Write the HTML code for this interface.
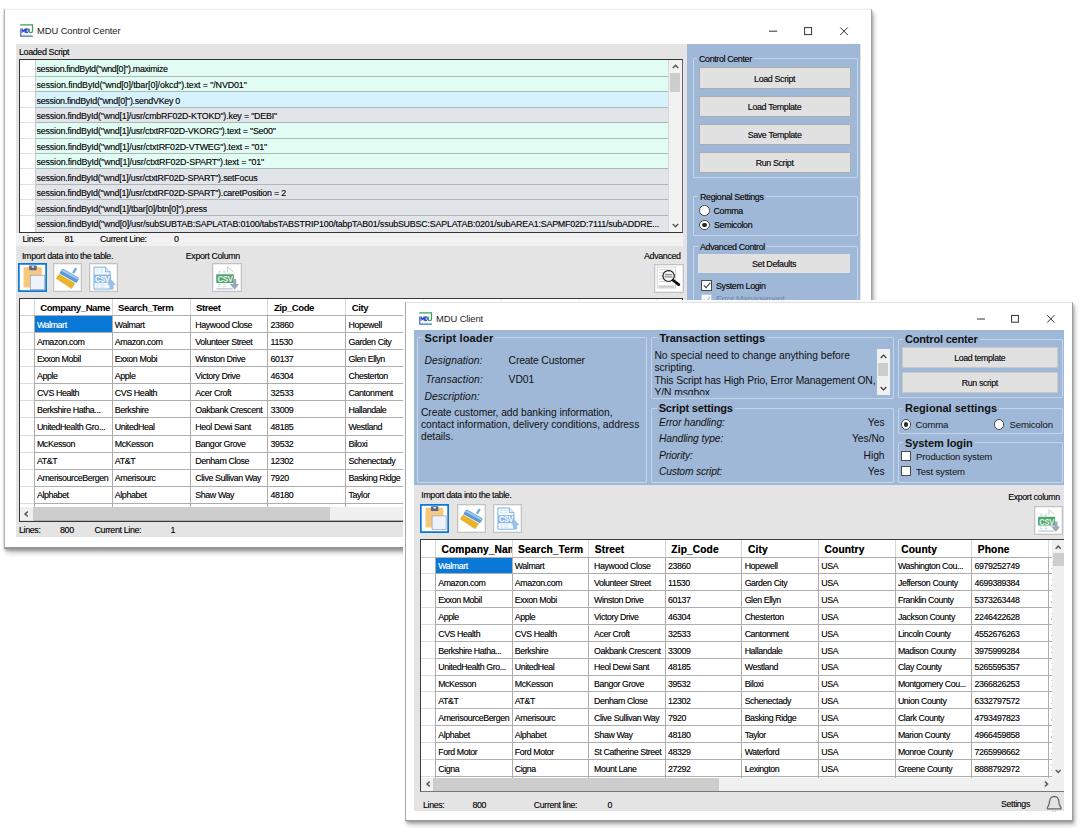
<!DOCTYPE html>
<html><head><meta charset="utf-8"><title>MDU</title>
<style>
*{box-sizing:border-box;margin:0;padding:0}
html,body{width:1080px;height:828px;overflow:hidden;background:#fff}
body{position:relative;font-family:"Liberation Sans",sans-serif;font-size:8.9px;color:#111;letter-spacing:-0.355px}
div,span,b,i{position:absolute;white-space:nowrap}
b{font-weight:bold}
i{font-style:normal}
.win{background:#fff;border-left:1px solid #b0b0b0;border-top:1px solid #ededed;border-right:1.4px solid #a2a2a2;border-bottom:2px solid #969696;box-shadow:-1px 0 1px rgba(0,0,0,.08),1px 2px 2px rgba(0,0,0,.2),2px 4px 5px rgba(0,0,0,.24)}
.client{background:#e4e4e4}
.blue{background:#9fb8d8}
.ttl{font-size:9.4px;letter-spacing:-0.08px;color:#1c1c1c}
.t{line-height:12px;height:12px}
.gb{border:1px solid #c4d4ea;border-radius:1px}
.gbl{background:#9fb8d8;padding:0 2px;line-height:11px;height:11px}
.btn{background:#e1e1e1;border:1px solid #adadad;text-align:center}
.btn i{left:0;right:0;top:50%;margin-top:-5.3px;height:12px;line-height:12px;text-align:center}
.ib{background:#fff;box-shadow:inset 0 0 0 1px #c3c3c3,inset 0 0 0 2px #ededed}
.ib.foc{box-shadow:inset 0 0 0 1.7px #0a78d7}
svg{position:absolute;overflow:visible}
/* script grid */
.sgrid{left:19px;top:59px;width:664.3px;height:173.6px;border:1.5px solid #333;border-right-color:#666;background:#fff;overflow:hidden}
.srow{left:0;width:648.6px}
.srow::after{content:"";position:absolute;left:15.5px;right:0;bottom:0;height:1px;background:#aeb6b6}
.srow.g{background:#e0fcf3}
.srow.b{background:#d6f2fd}
.srow.y{background:#e1e5ea}
.srow .rh{left:0;top:0;bottom:0;width:15.5px;background:#fff;border-right:1px solid #c9c9c9;border-bottom:1px solid #e0e0e0}
.srow .st{left:16.5px;top:2.3px;line-height:12px;height:12px;font-size:8.9px}
/* data grids */
.dg1,.dg2{background:#fff;overflow:hidden}
.dg1{left:19px;top:298.3px;width:664.3px;height:223.5px;border:1.5px solid #383838}
.dg2{left:419.5px;top:539px;width:644.7px;height:253px;border:1.5px solid #3c3c3c;border-right:0;border-bottom:1.7px solid #777}
.vl{width:1px;background:#adadad}
.vl.h{background:#d6d6d6}
.hl{height:1px;background:#adadad}
.hl.rh{background:#dcdcdc}
.selc{background:#0a78d7}
.hc{overflow:hidden}
.hc b{left:5.5px;top:50%;margin-top:-5px;line-height:12px;height:12px;font-size:9.6px;letter-spacing:-0.45px;color:#000}
.dc{overflow:hidden}
.dc i{text-shadow:0 0 .45px rgba(0,0,0,.55);left:2.2px;top:50%;margin-top:-5.5px;line-height:12px;height:12px;letter-spacing:-0.41px}
.dc.sel i{color:#fff;text-shadow:0 0 .45px rgba(255,255,255,.6)}
.dg2 .hc b{font-size:10.2px;letter-spacing:.12px;margin-top:-4.0px;text-shadow:0 0 .5px rgba(0,0,0,.6)}
.dg2 .dc i{font-size:8.8px;letter-spacing:-0.4px;margin-top:-5.2px}
.m2{font-size:8.8px}
.dg2 .hc{overflow:hidden}
/* scrollbars */
.sb{background:#f0f0f0}
.th{background:#cdcdcd}
.arr{font-size:9px;color:#444;letter-spacing:0;line-height:10px}
/* window 2 text (Arial-like) */
.a{font-size:10.3px;letter-spacing:-0.056px;line-height:12.2px;color:#111}
.ab{font-size:11px;font-weight:bold;letter-spacing:-0.07px;line-height:12px;color:#111}
.ai{font-size:10.3px;font-style:italic;letter-spacing:-0.12px;line-height:12px;color:#111}
.r{text-align:right}
.radio{width:10.4px;height:10.4px;border-radius:50%;background:#fff;border:1px solid #4a4a4a}
.radio.on::after{content:"";position:absolute;left:2px;top:2px;right:2px;bottom:2px;border-radius:50%;background:#2a2a2a}
.cb{width:10.2px;height:10.2px;background:#fff;border:1px solid #4a4a4a}
.as{font-size:9.6px;letter-spacing:-0.16px;line-height:12px;color:#111}
.win2{background:#fff;border-left:1px solid #a9a9a9;border-top:1px solid #e2e2e2;border-right:1.4px solid #9c9c9c;border-bottom:1.5px solid #989898;box-shadow:-2px -2px 0 0 rgba(255,255,255,.92),1px 2px 2px rgba(0,0,0,.2),2px 4px 5px rgba(0,0,0,.24)}
.t,.srow .st,.btn i,.gbl{text-shadow:0 0 .45px rgba(0,0,0,.5)}
.ab,.a,.ai,.as,.ttl{text-shadow:none}

</style></head>
<body>
<!-- ================= WINDOW 1 : MDU Control Center ================= -->
<div class="win" style="left:4px;top:9.3px;width:868.4px;height:540px"></div>
<svg style="left:20.2px;top:24.4px" width="13.4" height="13.4" viewBox="0 0 13.4 13.4">
  <path d="M0.2 0.9H12.5V7" fill="none" stroke="#37a35a" stroke-width="1.25"/>
  <path d="M9.2 4.4V7Q9.2 8.7 10.8 8.7Q12.5 8.7 12.5 7" fill="none" stroke="#37a35a" stroke-width="1.3"/>
  <path d="M0.75 4.4V12.2H12.9" fill="none" stroke="#3f6ec6" stroke-width="1.2"/>
  <path d="M2.1 8.7V4.9L3.6 7.5L5.1 4.9V8.7M6.2 4.9V8.7H6.9Q8.3 8.7 8.3 6.8Q8.3 4.9 6.9 4.9Z" fill="none" stroke="#2f48c6" stroke-width="1.1" stroke-linejoin="round"/>
</svg>
<span class="ttl t" style="left:37px;top:25px">MDU Control Center</span>
<svg style="left:768px;top:25px" width="84" height="12" viewBox="0 0 84 12">
  <path d="M1 6.2H9.2" stroke="#333" stroke-width="1" fill="none"/>
  <rect x="36.6" y="2.6" width="7" height="7" stroke="#333" stroke-width="1" fill="none"/>
  <path d="M72.2 2.4L79.8 10M79.8 2.4L72.2 10" stroke="#333" stroke-width="1" fill="none"/>
</svg>
<div class="client" style="left:16px;top:44px;width:845px;height:493px"></div>
<div class="blue" style="left:687px;top:44px;width:173.2px;height:300px"></div>
<span class="t" style="left:19px;top:46px">Loaded Script</span>
<div class="sgrid">
<div class="srow g" style="top:0.00px;height:16.80px"><span class="rh"></span><span class="st" style="letter-spacing:-0.338px;top:3.1px">session.findById("wnd[0]").maximize</span></div>
<div class="srow g" style="top:16.80px;height:15.43px"><span class="rh"></span><span class="st" style="letter-spacing:-0.107px">session.findById("wnd[0]/tbar[0]/okcd").text = "/NVD01"</span></div>
<div class="srow b" style="top:32.23px;height:15.43px"><span class="rh"></span><span class="st" style="letter-spacing:-0.265px">session.findById("wnd[0]").sendVKey 0</span></div>
<div class="srow y" style="top:47.66px;height:15.43px"><span class="rh"></span><span class="st" style="letter-spacing:-0.197px">session.findById("wnd[1]/usr/cmbRF02D-KTOKD").key = "DEBI"</span></div>
<div class="srow g" style="top:63.09px;height:15.43px"><span class="rh"></span><span class="st" style="letter-spacing:-0.197px">session.findById("wnd[1]/usr/ctxtRF02D-VKORG").text = "Se00"</span></div>
<div class="srow g" style="top:78.52px;height:15.43px"><span class="rh"></span><span class="st" style="letter-spacing:-0.176px">session.findById("wnd[1]/usr/ctxtRF02D-VTWEG").text = "01"</span></div>
<div class="srow g" style="top:93.95px;height:15.43px"><span class="rh"></span><span class="st" style="letter-spacing:-0.163px">session.findById("wnd[1]/usr/ctxtRF02D-SPART").text = "01"</span></div>
<div class="srow y" style="top:109.38px;height:15.43px"><span class="rh"></span><span class="st" style="letter-spacing:-0.207px">session.findById("wnd[1]/usr/ctxtRF02D-SPART").setFocus</span></div>
<div class="srow y" style="top:124.81px;height:15.43px"><span class="rh"></span><span class="st" style="letter-spacing:-0.207px">session.findById("wnd[1]/usr/ctxtRF02D-SPART").caretPosition = 2</span></div>
<div class="srow y" style="top:140.24px;height:15.43px"><span class="rh"></span><span class="st" style="letter-spacing:-0.19px">session.findById("wnd[1]/tbar[0]/btn[0]").press</span></div>
<div class="srow y" style="top:155.67px;height:18.43px"><span class="rh"></span><span class="st" style="letter-spacing:-0.185px">session.findById("wnd[0]/usr/subSUBTAB:SAPLATAB:0100/tabsTABSTRIP100/tabpTAB01/ssubSUBSC:SAPLATAB:0201/subAREA1:SAPMF02D:7111/subADDRE...</span></div>
<div class="sb" style="left:648.4px;top:0;width:15px;height:175px;background:#f2f2f2;border-left:1px solid #d4d8d8"></div>
<div class="th" style="left:649.8px;top:13px;width:10.2px;height:18.6px"></div>
<svg style="left:651.6px;top:4.4px" width="7" height="5" viewBox="0 0 7 5"><path d="M0.8 4L3.5 1.2L6.2 4" fill="none" stroke="#555" stroke-width="1.4"/></svg>
<svg style="left:651.6px;top:162.6px" width="7" height="5" viewBox="0 0 7 5"><path d="M0.8 1L3.5 3.8L6.2 1" fill="none" stroke="#555" stroke-width="1.4"/></svg>
</div>
<div style="left:16px;top:232.6px;width:667.2px;height:13.4px;background:#f1f1f1"></div>
<span class="t" style="left:22.5px;top:232.8px">Lines:</span>
<span class="t" style="left:64.5px;top:232.8px">81</span>
<span class="t" style="left:100px;top:232.8px">Current Line:</span>
<span class="t" style="left:174px;top:232.8px">0</span>
<span class="t" style="left:22px;top:250.3px">Import data into the table.</span>
<span class="t" style="left:185.8px;top:250.3px">Export Column</span>
<span class="t" style="left:644px;top:250.3px">Advanced</span>
<!-- icon buttons -->
<div class="ib foc" style="left:18.2px;top:263.1px;width:29.3px;height:29.4px"><svg style="left:0;top:0" width="29.3" height="29.4" viewBox="0 0 29.5 29.5" preserveAspectRatio="none"><rect x="5.6" y="4" width="18.4" height="20.5" rx="1.2" fill="#f8c77e"/>
<rect x="11.2" y="2.4" width="7.6" height="4.8" rx=".8" fill="#5b6781"/>
<rect x="13.8" y="3.2" width="2.4" height="1.5" rx=".4" fill="#f4f4f4"/>
<rect x="12.4" y="12.3" width="14.4" height="14.2" fill="#eef2fa" stroke="#9ca6b8" stroke-width=".8"/></svg></div>
<div class="ib" style="left:53.2px;top:263.1px;width:29.3px;height:29.4px"><svg style="left:0;top:0" width="29.3" height="29.4" viewBox="0 0 29.5 29.5" preserveAspectRatio="none"><g transform="rotate(7 14.5 15)"><path d="M22.1 4.2L19.6 9.4" stroke="#6ea9de" stroke-width="2.3" fill="none"/>
<path d="M9.6 6.6L25.4 13.2Q26.6 14.2 25.8 15.6L24 19L6 11.6L7.6 7.6Q8.4 6.2 9.6 6.6Z" fill="#5d99d6"/>
<path d="M9.4 7.2L25 13.7Q25.6 14.4 25 15.6L7.2 8.6Z" fill="#a3cbee"/>
<path d="M5.7 12.1L23 19.2L20 25.6L3 16.9Z" fill="#e9b32d"/></g></svg></div>
<div class="ib" style="left:88.8px;top:263.1px;width:29.5px;height:29.4px"><svg style="left:0;top:0" width="29.5" height="29.4" viewBox="0 0 29.5 29.5" preserveAspectRatio="none"><path d="M5 4.2H16.6L21.2 8.8V26.2H5Z" fill="#f6faff" stroke="#6ea6da" stroke-width=".9"/>
<path d="M16.6 4.2V8.8H21.2" fill="#dbeaf8" stroke="#6ea6da" stroke-width=".8"/>
<path d="M7.4 6.6H9.8M11.4 6.6H14M7.4 9H9.8M11.4 9H14.4M7.4 22H9.8M11.4 22H15.6M7.4 24.2H9.8M11.4 24.2H15.6" stroke="#b4d3f0" stroke-width=".7"/>
<rect x="5.2" y="11.6" width="16.6" height="8.3" fill="#86b7e6"/>
<text x="6" y="19.2" font-family="Liberation Sans" font-weight="bold" font-size="9.4" fill="#fff" textLength="14.6" lengthAdjust="spacingAndGlyphs">CSV</text>
<path d="M22.6 16.8L27 22H24.6V26.6H20.6V22H18.2Z" fill="#97c2ea"/></svg></div>
<div class="ib" style="left:212px;top:263.1px;width:29.5px;height:29.4px"><svg style="left:0;top:0" width="29.5" height="29.4" viewBox="0 0 29.5 29.5" preserveAspectRatio="none"><path d="M15.5 3.8V9.4M15.5 3.8L21.4 9" stroke="#b4c0d2" stroke-width=".8" fill="none"/>
<path d="M6.4 8.4H8.6M11 8.4H13.4M6.4 10H8.6M11 10H13.4M6.4 21.6H8.6M11 21.6H13.4M6.4 23.4H8.6M11 23.4H14" stroke="#98d4b2" stroke-width=".7"/>
<rect x="4.2" y="11.2" width="17.7" height="8.9" rx=".8" fill="#4fa771"/>
<text x="5.4" y="19.2" font-family="Liberation Sans" font-weight="bold" font-size="9.6" fill="#e9efe9" textLength="15.4" lengthAdjust="spacingAndGlyphs">CSV</text>
<path d="M4.4 25.9H20.6" stroke="#c3cee0" stroke-width="1.5"/>
<path d="M21.1 16H24.3V21.2H27L22.7 26.8L17.6 21.2H21.1Z" fill="#98a8bd"/></svg></div>
<div class="ib" style="left:654px;top:264.4px;width:29.5px;height:28.2px"><svg style="left:0;top:0" width="29.5" height="28.2" viewBox="0 0 29.5 29.5" preserveAspectRatio="none"><rect x="3.2" y="3.2" width="18.4" height="22" fill="#fff" stroke="#d0d0d0" stroke-width=".9"/>
<path d="M5 6H19M5 9.2H10M5 12.4H9M5 15.6H9.4M5 18.4H11" stroke="#d2d2d2" stroke-width="1.1"/>
<path d="M4.6 23.6H20.4" stroke="#c9c9c9" stroke-width="2.2"/>
<circle cx="14.6" cy="12.6" r="5.7" fill="#f6f6f6" stroke="#1c1c1c" stroke-width="1.2"/>
<path d="M11 11H18.2M10.6 13.6H18.4" stroke="#8a8a8a" stroke-width="1.3"/>
<path d="M19 17L24.8 21.6" stroke="#111" stroke-width="2.8" stroke-linecap="round"/></svg></div>
<div class="dg1">
<div class="selc" style="left:14.70px;top:16.90px;width:76.90px;height:16.05px"></div>
<div class="vl h" style="left:13.70px;top:0;height:15.90px"></div><div class="vl" style="left:13.70px;top:15.90px;height:300px"></div>
<div class="vl h" style="left:91.60px;top:0;height:15.90px"></div><div class="vl" style="left:91.60px;top:15.90px;height:300px"></div>
<div class="vl h" style="left:169.50px;top:0;height:15.90px"></div><div class="vl" style="left:169.50px;top:15.90px;height:300px"></div>
<div class="vl h" style="left:247.40px;top:0;height:15.90px"></div><div class="vl" style="left:247.40px;top:15.90px;height:300px"></div>
<div class="vl h" style="left:325.30px;top:0;height:15.90px"></div><div class="vl" style="left:325.30px;top:15.90px;height:300px"></div>
<div class="vl h" style="left:403.20px;top:0;height:15.90px"></div><div class="vl" style="left:403.20px;top:15.90px;height:300px"></div>
<div class="vl h" style="left:481.10px;top:0;height:15.90px"></div><div class="vl" style="left:481.10px;top:15.90px;height:300px"></div>
<div class="vl h" style="left:559.00px;top:0;height:15.90px"></div><div class="vl" style="left:559.00px;top:15.90px;height:300px"></div>
<div class="vl h" style="left:636.90px;top:0;height:15.90px"></div><div class="vl" style="left:636.90px;top:15.90px;height:300px"></div>
<div class="hl rh" style="left:0;top:15.90px;width:13.70px;background:#cfcfcf"></div><div class="hl" style="left:13.70px;top:15.90px;width:800px"></div>
<div class="hl rh" style="left:0;top:32.95px;width:13.70px"></div><div class="hl" style="left:14.70px;top:32.95px;width:800px"></div>
<div class="hl rh" style="left:0;top:50.00px;width:13.70px"></div><div class="hl" style="left:14.70px;top:50.00px;width:800px"></div>
<div class="hl rh" style="left:0;top:67.05px;width:13.70px"></div><div class="hl" style="left:14.70px;top:67.05px;width:800px"></div>
<div class="hl rh" style="left:0;top:84.10px;width:13.70px"></div><div class="hl" style="left:14.70px;top:84.10px;width:800px"></div>
<div class="hl rh" style="left:0;top:101.15px;width:13.70px"></div><div class="hl" style="left:14.70px;top:101.15px;width:800px"></div>
<div class="hl rh" style="left:0;top:118.20px;width:13.70px"></div><div class="hl" style="left:14.70px;top:118.20px;width:800px"></div>
<div class="hl rh" style="left:0;top:135.25px;width:13.70px"></div><div class="hl" style="left:14.70px;top:135.25px;width:800px"></div>
<div class="hl rh" style="left:0;top:152.30px;width:13.70px"></div><div class="hl" style="left:14.70px;top:152.30px;width:800px"></div>
<div class="hl rh" style="left:0;top:169.35px;width:13.70px"></div><div class="hl" style="left:14.70px;top:169.35px;width:800px"></div>
<div class="hl rh" style="left:0;top:186.40px;width:13.70px"></div><div class="hl" style="left:14.70px;top:186.40px;width:800px"></div>
<div class="hl rh" style="left:0;top:203.45px;width:13.70px"></div><div class="hl" style="left:14.70px;top:203.45px;width:800px"></div>
<div class="hl rh" style="left:0;top:220.50px;width:13.70px"></div><div class="hl" style="left:14.70px;top:220.50px;width:800px"></div>
<span class="hc" style="left:14.70px;top:0;width:76.90px;height:15.90px"><b>Company_Name</b></span><span class="hc" style="left:92.60px;top:0;width:76.90px;height:15.90px"><b>Search_Term</b></span><span class="hc" style="left:170.50px;top:0;width:76.90px;height:15.90px"><b>Street</b></span><span class="hc" style="left:248.40px;top:0;width:76.90px;height:15.90px"><b>Zip_Code</b></span><span class="hc" style="left:326.30px;top:0;width:76.90px;height:15.90px"><b>City</b></span><span class="hc" style="left:404.20px;top:0;width:76.90px;height:15.90px"><b>Country</b></span><span class="hc" style="left:482.10px;top:0;width:76.90px;height:15.90px"><b>County</b></span><span class="hc" style="left:560.00px;top:0;width:76.90px;height:15.90px"><b>Phone</b></span>
<span class="dc sel" style="left:14.70px;top:16.90px;width:76.90px;height:16.05px"><i>Walmart</i></span><span class="dc" style="left:92.60px;top:16.90px;width:76.90px;height:16.05px"><i>Walmart</i></span><span class="dc" style="left:170.50px;top:16.90px;width:76.90px;height:16.05px"><i style="left:4.8px">Haywood Close</i></span><span class="dc" style="left:248.40px;top:16.90px;width:76.90px;height:16.05px"><i>23860</i></span><span class="dc" style="left:326.30px;top:16.90px;width:76.90px;height:16.05px"><i>Hopewell</i></span><span class="dc" style="left:404.20px;top:16.90px;width:76.90px;height:16.05px"><i>USA</i></span><span class="dc" style="left:482.10px;top:16.90px;width:76.90px;height:16.05px"><i>Washington Cou...</i></span><span class="dc" style="left:560.00px;top:16.90px;width:76.90px;height:16.05px"><i>6979252749</i></span>
<span class="dc" style="left:14.70px;top:33.95px;width:76.90px;height:16.05px"><i>Amazon.com</i></span><span class="dc" style="left:92.60px;top:33.95px;width:76.90px;height:16.05px"><i>Amazon.com</i></span><span class="dc" style="left:170.50px;top:33.95px;width:76.90px;height:16.05px"><i style="left:4.8px">Volunteer Street</i></span><span class="dc" style="left:248.40px;top:33.95px;width:76.90px;height:16.05px"><i>11530</i></span><span class="dc" style="left:326.30px;top:33.95px;width:76.90px;height:16.05px"><i>Garden City</i></span><span class="dc" style="left:404.20px;top:33.95px;width:76.90px;height:16.05px"><i>USA</i></span><span class="dc" style="left:482.10px;top:33.95px;width:76.90px;height:16.05px"><i>Jefferson County</i></span><span class="dc" style="left:560.00px;top:33.95px;width:76.90px;height:16.05px"><i>4699389384</i></span>
<span class="dc" style="left:14.70px;top:51.00px;width:76.90px;height:16.05px"><i>Exxon Mobil</i></span><span class="dc" style="left:92.60px;top:51.00px;width:76.90px;height:16.05px"><i>Exxon Mobi</i></span><span class="dc" style="left:170.50px;top:51.00px;width:76.90px;height:16.05px"><i style="left:4.8px">Winston Drive</i></span><span class="dc" style="left:248.40px;top:51.00px;width:76.90px;height:16.05px"><i>60137</i></span><span class="dc" style="left:326.30px;top:51.00px;width:76.90px;height:16.05px"><i>Glen Ellyn</i></span><span class="dc" style="left:404.20px;top:51.00px;width:76.90px;height:16.05px"><i>USA</i></span><span class="dc" style="left:482.10px;top:51.00px;width:76.90px;height:16.05px"><i>Franklin County</i></span><span class="dc" style="left:560.00px;top:51.00px;width:76.90px;height:16.05px"><i>5373263448</i></span>
<span class="dc" style="left:14.70px;top:68.05px;width:76.90px;height:16.05px"><i>Apple</i></span><span class="dc" style="left:92.60px;top:68.05px;width:76.90px;height:16.05px"><i>Apple</i></span><span class="dc" style="left:170.50px;top:68.05px;width:76.90px;height:16.05px"><i style="left:4.8px">Victory Drive</i></span><span class="dc" style="left:248.40px;top:68.05px;width:76.90px;height:16.05px"><i>46304</i></span><span class="dc" style="left:326.30px;top:68.05px;width:76.90px;height:16.05px"><i>Chesterton</i></span><span class="dc" style="left:404.20px;top:68.05px;width:76.90px;height:16.05px"><i>USA</i></span><span class="dc" style="left:482.10px;top:68.05px;width:76.90px;height:16.05px"><i>Jackson County</i></span><span class="dc" style="left:560.00px;top:68.05px;width:76.90px;height:16.05px"><i>2246422628</i></span>
<span class="dc" style="left:14.70px;top:85.10px;width:76.90px;height:16.05px"><i>CVS Health</i></span><span class="dc" style="left:92.60px;top:85.10px;width:76.90px;height:16.05px"><i>CVS Health</i></span><span class="dc" style="left:170.50px;top:85.10px;width:76.90px;height:16.05px"><i style="left:4.8px">Acer Croft</i></span><span class="dc" style="left:248.40px;top:85.10px;width:76.90px;height:16.05px"><i>32533</i></span><span class="dc" style="left:326.30px;top:85.10px;width:76.90px;height:16.05px"><i>Cantonment</i></span><span class="dc" style="left:404.20px;top:85.10px;width:76.90px;height:16.05px"><i>USA</i></span><span class="dc" style="left:482.10px;top:85.10px;width:76.90px;height:16.05px"><i>Lincoln County</i></span><span class="dc" style="left:560.00px;top:85.10px;width:76.90px;height:16.05px"><i>4552676263</i></span>
<span class="dc" style="left:14.70px;top:102.15px;width:76.90px;height:16.05px"><i>Berkshire Hatha...</i></span><span class="dc" style="left:92.60px;top:102.15px;width:76.90px;height:16.05px"><i>Berkshire</i></span><span class="dc" style="left:170.50px;top:102.15px;width:76.90px;height:16.05px"><i style="left:4.8px">Oakbank Crescent</i></span><span class="dc" style="left:248.40px;top:102.15px;width:76.90px;height:16.05px"><i>33009</i></span><span class="dc" style="left:326.30px;top:102.15px;width:76.90px;height:16.05px"><i>Hallandale</i></span><span class="dc" style="left:404.20px;top:102.15px;width:76.90px;height:16.05px"><i>USA</i></span><span class="dc" style="left:482.10px;top:102.15px;width:76.90px;height:16.05px"><i>Madison County</i></span><span class="dc" style="left:560.00px;top:102.15px;width:76.90px;height:16.05px"><i>3975999284</i></span>
<span class="dc" style="left:14.70px;top:119.20px;width:76.90px;height:16.05px"><i>UnitedHealth Gro...</i></span><span class="dc" style="left:92.60px;top:119.20px;width:76.90px;height:16.05px"><i>UnitedHeal</i></span><span class="dc" style="left:170.50px;top:119.20px;width:76.90px;height:16.05px"><i style="left:4.8px">Heol Dewi Sant</i></span><span class="dc" style="left:248.40px;top:119.20px;width:76.90px;height:16.05px"><i>48185</i></span><span class="dc" style="left:326.30px;top:119.20px;width:76.90px;height:16.05px"><i>Westland</i></span><span class="dc" style="left:404.20px;top:119.20px;width:76.90px;height:16.05px"><i>USA</i></span><span class="dc" style="left:482.10px;top:119.20px;width:76.90px;height:16.05px"><i>Clay County</i></span><span class="dc" style="left:560.00px;top:119.20px;width:76.90px;height:16.05px"><i>5265595357</i></span>
<span class="dc" style="left:14.70px;top:136.25px;width:76.90px;height:16.05px"><i>McKesson</i></span><span class="dc" style="left:92.60px;top:136.25px;width:76.90px;height:16.05px"><i>McKesson</i></span><span class="dc" style="left:170.50px;top:136.25px;width:76.90px;height:16.05px"><i style="left:4.8px">Bangor Grove</i></span><span class="dc" style="left:248.40px;top:136.25px;width:76.90px;height:16.05px"><i>39532</i></span><span class="dc" style="left:326.30px;top:136.25px;width:76.90px;height:16.05px"><i>Biloxi</i></span><span class="dc" style="left:404.20px;top:136.25px;width:76.90px;height:16.05px"><i>USA</i></span><span class="dc" style="left:482.10px;top:136.25px;width:76.90px;height:16.05px"><i>Montgomery Cou...</i></span><span class="dc" style="left:560.00px;top:136.25px;width:76.90px;height:16.05px"><i>2366826253</i></span>
<span class="dc" style="left:14.70px;top:153.30px;width:76.90px;height:16.05px"><i>AT&amp;T</i></span><span class="dc" style="left:92.60px;top:153.30px;width:76.90px;height:16.05px"><i>AT&amp;T</i></span><span class="dc" style="left:170.50px;top:153.30px;width:76.90px;height:16.05px"><i style="left:4.8px">Denham Close</i></span><span class="dc" style="left:248.40px;top:153.30px;width:76.90px;height:16.05px"><i>12302</i></span><span class="dc" style="left:326.30px;top:153.30px;width:76.90px;height:16.05px"><i>Schenectady</i></span><span class="dc" style="left:404.20px;top:153.30px;width:76.90px;height:16.05px"><i>USA</i></span><span class="dc" style="left:482.10px;top:153.30px;width:76.90px;height:16.05px"><i>Union County</i></span><span class="dc" style="left:560.00px;top:153.30px;width:76.90px;height:16.05px"><i>6332797572</i></span>
<span class="dc" style="left:14.70px;top:170.35px;width:76.90px;height:16.05px"><i>AmerisourceBergen</i></span><span class="dc" style="left:92.60px;top:170.35px;width:76.90px;height:16.05px"><i>Amerisourc</i></span><span class="dc" style="left:170.50px;top:170.35px;width:76.90px;height:16.05px"><i style="left:4.8px">Clive Sullivan Way</i></span><span class="dc" style="left:248.40px;top:170.35px;width:76.90px;height:16.05px"><i>7920</i></span><span class="dc" style="left:326.30px;top:170.35px;width:76.90px;height:16.05px"><i>Basking Ridge</i></span><span class="dc" style="left:404.20px;top:170.35px;width:76.90px;height:16.05px"><i>USA</i></span><span class="dc" style="left:482.10px;top:170.35px;width:76.90px;height:16.05px"><i>Clark County</i></span><span class="dc" style="left:560.00px;top:170.35px;width:76.90px;height:16.05px"><i>4793497823</i></span>
<span class="dc" style="left:14.70px;top:187.40px;width:76.90px;height:16.05px"><i>Alphabet</i></span><span class="dc" style="left:92.60px;top:187.40px;width:76.90px;height:16.05px"><i>Alphabet</i></span><span class="dc" style="left:170.50px;top:187.40px;width:76.90px;height:16.05px"><i style="left:4.8px">Shaw Way</i></span><span class="dc" style="left:248.40px;top:187.40px;width:76.90px;height:16.05px"><i>48180</i></span><span class="dc" style="left:326.30px;top:187.40px;width:76.90px;height:16.05px"><i>Taylor</i></span><span class="dc" style="left:404.20px;top:187.40px;width:76.90px;height:16.05px"><i>USA</i></span><span class="dc" style="left:482.10px;top:187.40px;width:76.90px;height:16.05px"><i>Marion County</i></span><span class="dc" style="left:560.00px;top:187.40px;width:76.90px;height:16.05px"><i>4966459858</i></span>

<div class="sb" style="left:0;top:208px;width:420px;height:13px"></div>
<div class="th" style="left:12.5px;top:208px;width:297px;height:13px"></div>
<svg style="left:4px;top:212px" width="4.6" height="6" viewBox="0 0 4.6 6"><path d="M3.8 0.6L1 3L3.8 5.4" fill="none" stroke="#555" stroke-width="1.4"/></svg>
</div>
<span class="t" style="left:19px;top:523.6px">Lines:</span>
<span class="t" style="left:60px;top:523.6px">800</span>
<span class="t" style="left:94.5px;top:523.6px">Current Line:</span>
<span class="t" style="left:170.5px;top:523.6px">1</span>
<!-- right panel -->
<div class="gb" style="left:692.7px;top:57.5px;width:165.5px;height:120.5px"></div>
<span class="gbl" style="left:697px;top:54px">Control Center</span>
<div class="btn" style="left:698.6px;top:67.3px;width:152px;height:21.7px"><i>Load Script</i></div>
<div class="btn" style="left:698.6px;top:95.5px;width:152px;height:21.7px"><i>Load Template</i></div>
<div class="btn" style="left:698.6px;top:123.6px;width:152px;height:21.7px"><i>Save Template</i></div>
<div class="btn" style="left:698.6px;top:151.7px;width:152px;height:21.7px"><i>Run Script</i></div>
<div class="gb" style="left:692.8px;top:196px;width:165.4px;height:40px"></div>
<span class="gbl" style="left:698px;top:192px">Regional Settings</span>
<span class="radio" style="left:699.3px;top:205.2px"></span>
<span class="t" style="left:713.5px;top:204.5px">Comma</span>
<span class="radio on" style="left:699.3px;top:219.8px"></span>
<span class="t" style="left:714px;top:219.3px">Semicolon</span>
<div class="gb" style="left:692.8px;top:246px;width:165.4px;height:110px"></div>
<span class="gbl" style="left:698px;top:242px">Advanced Control</span>
<div class="btn" style="left:698.3px;top:254px;width:151.5px;height:19px;border-color:#e1e1e1"><i>Set Defaults</i></div>
<span class="cb" style="left:701px;top:280px;width:10.5px;height:10.5px;border-color:#4a4a4a"><svg style="left:0.6px;top:0.8px" width="8" height="7" viewBox="0 0 8 7"><path d="M0.8 3.4L3 5.6L7.2 0.8" fill="none" stroke="#444" stroke-width="1.1"/></svg></span>
<span class="t" style="left:716px;top:279.5px">System Login</span>
<span class="cb" style="left:701px;top:294px;width:10.5px;height:10.5px;border-color:#c3cfe0;opacity:.9"><svg style="left:0.6px;top:0.8px" width="8" height="7" viewBox="0 0 8 7"><path d="M0.8 3.4L3 5.6L7.2 0.8" fill="none" stroke="#c4c4c4" stroke-width="1.1"/></svg></span>
<span class="t" style="left:716px;top:293.3px;color:#7389aa;text-shadow:none">Error Management</span>
<!-- ================= WINDOW 2 : MDU Client ================= -->
<div class="win2" style="left:404.8px;top:301.9px;width:668.7px;height:519.5px"></div>
<svg style="left:419.2px;top:311.8px" width="13.4" height="13.4" viewBox="0 0 13.4 13.4">
  <path d="M0.2 0.9H12.5V7" fill="none" stroke="#37a35a" stroke-width="1.25"/>
  <path d="M9.2 4.4V7Q9.2 8.7 10.8 8.7Q12.5 8.7 12.5 7" fill="none" stroke="#37a35a" stroke-width="1.3"/>
  <path d="M0.75 4.4V12.2H12.9" fill="none" stroke="#3f6ec6" stroke-width="1.2"/>
  <path d="M2.1 8.7V4.9L3.6 7.5L5.1 4.9V8.7M6.2 4.9V8.7H6.9Q8.3 8.7 8.3 6.8Q8.3 4.9 6.9 4.9Z" fill="none" stroke="#2f48c6" stroke-width="1.1" stroke-linejoin="round"/>
</svg>
<span class="ttl t" style="left:436px;top:313px">MDU Client</span>
<svg style="left:976px;top:313px" width="84" height="12" viewBox="0 0 84 12">
  <path d="M1 6H9" stroke="#333" stroke-width="1" fill="none"/>
  <rect x="35.6" y="2.4" width="6.8" height="6.8" stroke="#333" stroke-width="1" fill="none"/>
  <path d="M71.2 2.2L78.4 9.6M78.4 2.2L71.2 9.6" stroke="#333" stroke-width="1" fill="none"/>
</svg>
<div class="client" style="left:414.2px;top:330.3px;width:650.2px;height:481.2px"></div>
<div class="blue" style="left:414.2px;top:330.3px;width:650.2px;height:154.9px"></div>
<!-- Script loader -->
<div class="gb" style="left:417px;top:337px;width:230px;height:145.5px"></div>
<span class="gbl ab" style="letter-spacing:.12px;left:422.5px;top:331.5px">Script loader</span>
<span class="ai" style="letter-spacing:.06px;left:424.5px;top:354.9px">Designation:</span>
<span class="a" style="left:508.6px;top:354.9px;letter-spacing:-.144px">Create Customer</span>
<span class="ai" style="letter-spacing:.13px;left:425.5px;top:373.5px">Transaction:</span>
<span class="a" style="left:508.6px;top:373.7px">VD01</span>
<span class="ai" style="letter-spacing:.06px;left:424.5px;top:390.9px">Description:</span>
<span class="a" style="left:421px;top:407.20px;letter-spacing:-0.062px">Create customer, add banking information,</span>
<span class="a" style="left:421px;top:419.30px;letter-spacing:-0.031px">contact information, delivery conditions, address</span>
<span class="a" style="left:421px;top:431.40px;letter-spacing:-0.05px">details.</span>
<!-- Transaction settings -->
<div class="gb" style="left:651.3px;top:337px;width:242.7px;height:61.5px"></div>
<span class="gbl ab" style="left:657.5px;top:331.5px">Transaction settings</span>
<div style="left:653px;top:349px;width:237px;height:45.5px;overflow:hidden">
  <span class="a" style="left:1.4px;top:1.30px;letter-spacing:-0.007px">No special need to change anything before</span>
  <span class="a" style="left:1.4px;top:13.47px;letter-spacing:-0.05px">scripting.</span>
  <span class="a" style="left:1.4px;top:25.64px;letter-spacing:-0.107px">This Script has High Prio, Error Management ON,</span>
  <span class="a" style="left:1.4px;top:37.81px;letter-spacing:-0.05px">Y/N msgbox</span>
  <div class="sb" style="left:224px;top:0;width:12.7px;height:45.5px"></div>
  <div class="th" style="left:224.5px;top:13.5px;width:10.5px;height:13.5px"></div>
  <svg style="left:227px;top:4.5px" width="7" height="5" viewBox="0 0 7 5"><path d="M0.7 4L3.5 1.1L6.3 4" fill="none" stroke="#333" stroke-width="1.1"/></svg>
  <svg style="left:227px;top:36.5px" width="7" height="5" viewBox="0 0 7 5"><path d="M0.7 1L3.5 3.9L6.3 1" fill="none" stroke="#333" stroke-width="1.1"/></svg>
</div>
<!-- Script settings -->
<div class="gb" style="left:651.3px;top:407.5px;width:242.7px;height:75px"></div>
<span class="gbl ab" style="letter-spacing:-.15px;left:656.7px;top:402px">Script settings</span>
<span class="ai" style="left:659px;top:417.4px">Error handling:</span>
<span class="ai" style="left:659px;top:432.9px">Handling type:</span>
<span class="ai" style="left:659px;top:449.7px">Priority:</span>
<span class="ai" style="letter-spacing:-.2px;left:659px;top:465.9px">Custom script:</span>
<span class="a r" style="left:784.5px;width:100px;top:416.9px">Yes</span>
<span class="a r" style="left:784.5px;width:100px;top:432.9px">Yes/No</span>
<span class="a r" style="left:784.5px;width:100px;top:449.9px">High</span>
<span class="a r" style="left:784.5px;width:100px;top:465.9px">Yes</span>
<!-- Control center -->
<div class="gb" style="left:897.5px;top:338.7px;width:165px;height:59px"></div>
<span class="gbl ab" style="letter-spacing:-.19px;left:903px;top:333.2px">Control center</span>
<div class="btn m2" style="left:902px;top:347px;width:155.5px;height:20.8px;border-color:#c8c8c8"><i>Load template</i></div>
<div class="btn m2" style="left:902px;top:372.1px;width:155.5px;height:20.9px;border-color:#c8c8c8"><i>Run script</i></div>
<!-- Regional settings -->
<div class="gb" style="left:897.5px;top:407.5px;width:165px;height:26px"></div>
<span class="gbl ab" style="letter-spacing:.02px;left:903px;top:402px">Regional settings</span>
<span class="radio on" style="left:900.8px;top:419.2px"></span>
<span class="as" style="left:915.5px;top:419.4px">Comma</span>
<span class="radio" style="left:993.8px;top:419.2px"></span>
<span class="as" style="left:1009.5px;top:419.4px">Semicolon</span>
<!-- System login -->
<div class="gb" style="left:897.5px;top:442px;width:165px;height:40.5px"></div>
<span class="gbl ab" style="left:903px;top:436.5px">System login</span>
<span class="cb" style="left:901.3px;top:450.8px"></span>
<span class="as" style="left:916px;top:450.9px">Production system</span>
<span class="cb" style="left:901.3px;top:465.6px"></span>
<span class="as" style="left:916px;top:466.2px">Test system</span>
<!-- toolbar -->
<span class="t m2" style="left:421.3px;top:489px">Import data into the table.</span>
<span class="t m2 r" style="left:959.8px;width:100px;top:490.8px">Export column</span>
<div class="ib foc" style="left:420px;top:504.3px;width:28.8px;height:28.4px"><svg style="left:0;top:0" width="28.8" height="28.4" viewBox="0 0 29.5 29.5" preserveAspectRatio="none"><rect x="5.6" y="4" width="18.4" height="20.5" rx="1.2" fill="#f8c77e"/>
<rect x="11.2" y="2.4" width="7.6" height="4.8" rx=".8" fill="#5b6781"/>
<rect x="13.8" y="3.2" width="2.4" height="1.5" rx=".4" fill="#f4f4f4"/>
<rect x="12.4" y="12.3" width="14.4" height="14.2" fill="#eef2fa" stroke="#9ca6b8" stroke-width=".8"/></svg></div>
<div class="ib" style="left:456.8px;top:504.3px;width:28.8px;height:28.4px"><svg style="left:0;top:0" width="28.8" height="28.4" viewBox="0 0 29.5 29.5" preserveAspectRatio="none"><g transform="rotate(7 14.5 15)"><path d="M22.1 4.2L19.6 9.4" stroke="#6ea9de" stroke-width="2.3" fill="none"/>
<path d="M9.6 6.6L25.4 13.2Q26.6 14.2 25.8 15.6L24 19L6 11.6L7.6 7.6Q8.4 6.2 9.6 6.6Z" fill="#5d99d6"/>
<path d="M9.4 7.2L25 13.7Q25.6 14.4 25 15.6L7.2 8.6Z" fill="#a3cbee"/>
<path d="M5.7 12.1L23 19.2L20 25.6L3 16.9Z" fill="#e9b32d"/></g></svg></div>
<div class="ib" style="left:493.4px;top:504.3px;width:29px;height:28.4px"><svg style="left:0;top:0" width="29" height="28.4" viewBox="0 0 29.5 29.5" preserveAspectRatio="none"><path d="M5 4.2H16.6L21.2 8.8V26.2H5Z" fill="#f6faff" stroke="#6ea6da" stroke-width=".9"/>
<path d="M16.6 4.2V8.8H21.2" fill="#dbeaf8" stroke="#6ea6da" stroke-width=".8"/>
<path d="M7.4 6.6H9.8M11.4 6.6H14M7.4 9H9.8M11.4 9H14.4M7.4 22H9.8M11.4 22H15.6M7.4 24.2H9.8M11.4 24.2H15.6" stroke="#b4d3f0" stroke-width=".7"/>
<rect x="5.2" y="11.6" width="16.6" height="8.3" fill="#86b7e6"/>
<text x="6" y="19.2" font-family="Liberation Sans" font-weight="bold" font-size="9.4" fill="#fff" textLength="14.6" lengthAdjust="spacingAndGlyphs">CSV</text>
<path d="M22.6 16.8L27 22H24.6V26.6H20.6V22H18.2Z" fill="#97c2ea"/></svg></div>
<div class="ib" style="left:1034.2px;top:506.3px;width:28.5px;height:28.5px"><svg style="left:0;top:0" width="28.5" height="28.5" viewBox="0 0 29.5 29.5" preserveAspectRatio="none"><path d="M15.5 3.8V9.4M15.5 3.8L21.4 9" stroke="#b4c0d2" stroke-width=".8" fill="none"/>
<path d="M6.4 8.4H8.6M11 8.4H13.4M6.4 10H8.6M11 10H13.4M6.4 21.6H8.6M11 21.6H13.4M6.4 23.4H8.6M11 23.4H14" stroke="#98d4b2" stroke-width=".7"/>
<rect x="4.2" y="11.2" width="17.7" height="8.9" rx=".8" fill="#4fa771"/>
<text x="5.4" y="19.2" font-family="Liberation Sans" font-weight="bold" font-size="9.6" fill="#e9efe9" textLength="15.4" lengthAdjust="spacingAndGlyphs">CSV</text>
<path d="M4.4 25.9H20.6" stroke="#c3cee0" stroke-width="1.5"/>
<path d="M21.1 16H24.3V21.2H27L22.7 26.8L17.6 21.2H21.1Z" fill="#98a8bd"/></svg></div>
<div class="dg2">
<div class="selc" style="left:15.50px;top:17.50px;width:75.62px;height:15.86px"></div>
<div class="vl h" style="left:14.50px;top:0;height:16.50px"></div><div class="vl" style="left:14.50px;top:16.50px;height:300px"></div>
<div class="vl h" style="left:91.12px;top:0;height:16.50px"></div><div class="vl" style="left:91.12px;top:16.50px;height:300px"></div>
<div class="vl h" style="left:167.74px;top:0;height:16.50px"></div><div class="vl" style="left:167.74px;top:16.50px;height:300px"></div>
<div class="vl h" style="left:244.36px;top:0;height:16.50px"></div><div class="vl" style="left:244.36px;top:16.50px;height:300px"></div>
<div class="vl h" style="left:320.98px;top:0;height:16.50px"></div><div class="vl" style="left:320.98px;top:16.50px;height:300px"></div>
<div class="vl h" style="left:397.60px;top:0;height:16.50px"></div><div class="vl" style="left:397.60px;top:16.50px;height:300px"></div>
<div class="vl h" style="left:474.22px;top:0;height:16.50px"></div><div class="vl" style="left:474.22px;top:16.50px;height:300px"></div>
<div class="vl h" style="left:550.84px;top:0;height:16.50px"></div><div class="vl" style="left:550.84px;top:16.50px;height:300px"></div>
<div class="vl h" style="left:627.46px;top:0;height:16.50px"></div><div class="vl" style="left:627.46px;top:16.50px;height:300px"></div>
<div class="vl h" style="left:704.08px;top:0;height:16.50px"></div><div class="vl" style="left:704.08px;top:16.50px;height:300px"></div>
<div class="hl rh" style="left:0;top:16.50px;width:14.50px;background:#cfcfcf"></div><div class="hl" style="left:14.50px;top:16.50px;width:800px"></div>
<div class="hl rh" style="left:0;top:33.36px;width:14.50px"></div><div class="hl" style="left:15.50px;top:33.36px;width:800px"></div>
<div class="hl rh" style="left:0;top:50.22px;width:14.50px"></div><div class="hl" style="left:15.50px;top:50.22px;width:800px"></div>
<div class="hl rh" style="left:0;top:67.08px;width:14.50px"></div><div class="hl" style="left:15.50px;top:67.08px;width:800px"></div>
<div class="hl rh" style="left:0;top:83.94px;width:14.50px"></div><div class="hl" style="left:15.50px;top:83.94px;width:800px"></div>
<div class="hl rh" style="left:0;top:100.80px;width:14.50px"></div><div class="hl" style="left:15.50px;top:100.80px;width:800px"></div>
<div class="hl rh" style="left:0;top:117.66px;width:14.50px"></div><div class="hl" style="left:15.50px;top:117.66px;width:800px"></div>
<div class="hl rh" style="left:0;top:134.52px;width:14.50px"></div><div class="hl" style="left:15.50px;top:134.52px;width:800px"></div>
<div class="hl rh" style="left:0;top:151.38px;width:14.50px"></div><div class="hl" style="left:15.50px;top:151.38px;width:800px"></div>
<div class="hl rh" style="left:0;top:168.24px;width:14.50px"></div><div class="hl" style="left:15.50px;top:168.24px;width:800px"></div>
<div class="hl rh" style="left:0;top:185.10px;width:14.50px"></div><div class="hl" style="left:15.50px;top:185.10px;width:800px"></div>
<div class="hl rh" style="left:0;top:201.96px;width:14.50px"></div><div class="hl" style="left:15.50px;top:201.96px;width:800px"></div>
<div class="hl rh" style="left:0;top:218.82px;width:14.50px"></div><div class="hl" style="left:15.50px;top:218.82px;width:800px"></div>
<div class="hl rh" style="left:0;top:235.68px;width:14.50px"></div><div class="hl" style="left:15.50px;top:235.68px;width:800px"></div>
<div class="hl rh" style="left:0;top:252.54px;width:14.50px"></div><div class="hl" style="left:15.50px;top:252.54px;width:800px"></div>
<span class="hc" style="left:15.50px;top:0;width:75.62px;height:16.50px"><b>Company_Name</b></span><span class="hc" style="left:92.12px;top:0;width:75.62px;height:16.50px"><b>Search_Term</b></span><span class="hc" style="left:168.74px;top:0;width:75.62px;height:16.50px"><b>Street</b></span><span class="hc" style="left:245.36px;top:0;width:75.62px;height:16.50px"><b>Zip_Code</b></span><span class="hc" style="left:321.98px;top:0;width:75.62px;height:16.50px"><b>City</b></span><span class="hc" style="left:398.60px;top:0;width:75.62px;height:16.50px"><b>Country</b></span><span class="hc" style="left:475.22px;top:0;width:75.62px;height:16.50px"><b>County</b></span><span class="hc" style="left:551.84px;top:0;width:75.62px;height:16.50px"><b>Phone</b></span>
<span class="dc sel" style="left:15.50px;top:17.50px;width:75.62px;height:15.86px"><i>Walmart</i></span><span class="dc" style="left:92.12px;top:17.50px;width:75.62px;height:15.86px"><i>Walmart</i></span><span class="dc" style="left:168.74px;top:17.50px;width:75.62px;height:15.86px"><i style="left:4.8px">Haywood Close</i></span><span class="dc" style="left:245.36px;top:17.50px;width:75.62px;height:15.86px"><i>23860</i></span><span class="dc" style="left:321.98px;top:17.50px;width:75.62px;height:15.86px"><i>Hopewell</i></span><span class="dc" style="left:398.60px;top:17.50px;width:75.62px;height:15.86px"><i>USA</i></span><span class="dc" style="left:475.22px;top:17.50px;width:75.62px;height:15.86px"><i>Washington Cou...</i></span><span class="dc" style="left:551.84px;top:17.50px;width:75.62px;height:15.86px"><i>6979252749</i></span>
<span class="dc" style="left:15.50px;top:34.36px;width:75.62px;height:15.86px"><i>Amazon.com</i></span><span class="dc" style="left:92.12px;top:34.36px;width:75.62px;height:15.86px"><i>Amazon.com</i></span><span class="dc" style="left:168.74px;top:34.36px;width:75.62px;height:15.86px"><i style="left:4.8px">Volunteer Street</i></span><span class="dc" style="left:245.36px;top:34.36px;width:75.62px;height:15.86px"><i>11530</i></span><span class="dc" style="left:321.98px;top:34.36px;width:75.62px;height:15.86px"><i>Garden City</i></span><span class="dc" style="left:398.60px;top:34.36px;width:75.62px;height:15.86px"><i>USA</i></span><span class="dc" style="left:475.22px;top:34.36px;width:75.62px;height:15.86px"><i>Jefferson County</i></span><span class="dc" style="left:551.84px;top:34.36px;width:75.62px;height:15.86px"><i>4699389384</i></span>
<span class="dc" style="left:15.50px;top:51.22px;width:75.62px;height:15.86px"><i>Exxon Mobil</i></span><span class="dc" style="left:92.12px;top:51.22px;width:75.62px;height:15.86px"><i>Exxon Mobi</i></span><span class="dc" style="left:168.74px;top:51.22px;width:75.62px;height:15.86px"><i style="left:4.8px">Winston Drive</i></span><span class="dc" style="left:245.36px;top:51.22px;width:75.62px;height:15.86px"><i>60137</i></span><span class="dc" style="left:321.98px;top:51.22px;width:75.62px;height:15.86px"><i>Glen Ellyn</i></span><span class="dc" style="left:398.60px;top:51.22px;width:75.62px;height:15.86px"><i>USA</i></span><span class="dc" style="left:475.22px;top:51.22px;width:75.62px;height:15.86px"><i>Franklin County</i></span><span class="dc" style="left:551.84px;top:51.22px;width:75.62px;height:15.86px"><i>5373263448</i></span>
<span class="dc" style="left:15.50px;top:68.08px;width:75.62px;height:15.86px"><i>Apple</i></span><span class="dc" style="left:92.12px;top:68.08px;width:75.62px;height:15.86px"><i>Apple</i></span><span class="dc" style="left:168.74px;top:68.08px;width:75.62px;height:15.86px"><i style="left:4.8px">Victory Drive</i></span><span class="dc" style="left:245.36px;top:68.08px;width:75.62px;height:15.86px"><i>46304</i></span><span class="dc" style="left:321.98px;top:68.08px;width:75.62px;height:15.86px"><i>Chesterton</i></span><span class="dc" style="left:398.60px;top:68.08px;width:75.62px;height:15.86px"><i>USA</i></span><span class="dc" style="left:475.22px;top:68.08px;width:75.62px;height:15.86px"><i>Jackson County</i></span><span class="dc" style="left:551.84px;top:68.08px;width:75.62px;height:15.86px"><i>2246422628</i></span>
<span class="dc" style="left:15.50px;top:84.94px;width:75.62px;height:15.86px"><i>CVS Health</i></span><span class="dc" style="left:92.12px;top:84.94px;width:75.62px;height:15.86px"><i>CVS Health</i></span><span class="dc" style="left:168.74px;top:84.94px;width:75.62px;height:15.86px"><i style="left:4.8px">Acer Croft</i></span><span class="dc" style="left:245.36px;top:84.94px;width:75.62px;height:15.86px"><i>32533</i></span><span class="dc" style="left:321.98px;top:84.94px;width:75.62px;height:15.86px"><i>Cantonment</i></span><span class="dc" style="left:398.60px;top:84.94px;width:75.62px;height:15.86px"><i>USA</i></span><span class="dc" style="left:475.22px;top:84.94px;width:75.62px;height:15.86px"><i>Lincoln County</i></span><span class="dc" style="left:551.84px;top:84.94px;width:75.62px;height:15.86px"><i>4552676263</i></span>
<span class="dc" style="left:15.50px;top:101.80px;width:75.62px;height:15.86px"><i>Berkshire Hatha...</i></span><span class="dc" style="left:92.12px;top:101.80px;width:75.62px;height:15.86px"><i>Berkshire</i></span><span class="dc" style="left:168.74px;top:101.80px;width:75.62px;height:15.86px"><i style="left:4.8px">Oakbank Crescent</i></span><span class="dc" style="left:245.36px;top:101.80px;width:75.62px;height:15.86px"><i>33009</i></span><span class="dc" style="left:321.98px;top:101.80px;width:75.62px;height:15.86px"><i>Hallandale</i></span><span class="dc" style="left:398.60px;top:101.80px;width:75.62px;height:15.86px"><i>USA</i></span><span class="dc" style="left:475.22px;top:101.80px;width:75.62px;height:15.86px"><i>Madison County</i></span><span class="dc" style="left:551.84px;top:101.80px;width:75.62px;height:15.86px"><i>3975999284</i></span>
<span class="dc" style="left:15.50px;top:118.66px;width:75.62px;height:15.86px"><i>UnitedHealth Gro...</i></span><span class="dc" style="left:92.12px;top:118.66px;width:75.62px;height:15.86px"><i>UnitedHeal</i></span><span class="dc" style="left:168.74px;top:118.66px;width:75.62px;height:15.86px"><i style="left:4.8px">Heol Dewi Sant</i></span><span class="dc" style="left:245.36px;top:118.66px;width:75.62px;height:15.86px"><i>48185</i></span><span class="dc" style="left:321.98px;top:118.66px;width:75.62px;height:15.86px"><i>Westland</i></span><span class="dc" style="left:398.60px;top:118.66px;width:75.62px;height:15.86px"><i>USA</i></span><span class="dc" style="left:475.22px;top:118.66px;width:75.62px;height:15.86px"><i>Clay County</i></span><span class="dc" style="left:551.84px;top:118.66px;width:75.62px;height:15.86px"><i>5265595357</i></span>
<span class="dc" style="left:15.50px;top:135.52px;width:75.62px;height:15.86px"><i>McKesson</i></span><span class="dc" style="left:92.12px;top:135.52px;width:75.62px;height:15.86px"><i>McKesson</i></span><span class="dc" style="left:168.74px;top:135.52px;width:75.62px;height:15.86px"><i style="left:4.8px">Bangor Grove</i></span><span class="dc" style="left:245.36px;top:135.52px;width:75.62px;height:15.86px"><i>39532</i></span><span class="dc" style="left:321.98px;top:135.52px;width:75.62px;height:15.86px"><i>Biloxi</i></span><span class="dc" style="left:398.60px;top:135.52px;width:75.62px;height:15.86px"><i>USA</i></span><span class="dc" style="left:475.22px;top:135.52px;width:75.62px;height:15.86px"><i>Montgomery Cou...</i></span><span class="dc" style="left:551.84px;top:135.52px;width:75.62px;height:15.86px"><i>2366826253</i></span>
<span class="dc" style="left:15.50px;top:152.38px;width:75.62px;height:15.86px"><i>AT&amp;T</i></span><span class="dc" style="left:92.12px;top:152.38px;width:75.62px;height:15.86px"><i>AT&amp;T</i></span><span class="dc" style="left:168.74px;top:152.38px;width:75.62px;height:15.86px"><i style="left:4.8px">Denham Close</i></span><span class="dc" style="left:245.36px;top:152.38px;width:75.62px;height:15.86px"><i>12302</i></span><span class="dc" style="left:321.98px;top:152.38px;width:75.62px;height:15.86px"><i>Schenectady</i></span><span class="dc" style="left:398.60px;top:152.38px;width:75.62px;height:15.86px"><i>USA</i></span><span class="dc" style="left:475.22px;top:152.38px;width:75.62px;height:15.86px"><i>Union County</i></span><span class="dc" style="left:551.84px;top:152.38px;width:75.62px;height:15.86px"><i>6332797572</i></span>
<span class="dc" style="left:15.50px;top:169.24px;width:75.62px;height:15.86px"><i>AmerisourceBergen</i></span><span class="dc" style="left:92.12px;top:169.24px;width:75.62px;height:15.86px"><i>Amerisourc</i></span><span class="dc" style="left:168.74px;top:169.24px;width:75.62px;height:15.86px"><i style="left:4.8px">Clive Sullivan Way</i></span><span class="dc" style="left:245.36px;top:169.24px;width:75.62px;height:15.86px"><i>7920</i></span><span class="dc" style="left:321.98px;top:169.24px;width:75.62px;height:15.86px"><i>Basking Ridge</i></span><span class="dc" style="left:398.60px;top:169.24px;width:75.62px;height:15.86px"><i>USA</i></span><span class="dc" style="left:475.22px;top:169.24px;width:75.62px;height:15.86px"><i>Clark County</i></span><span class="dc" style="left:551.84px;top:169.24px;width:75.62px;height:15.86px"><i>4793497823</i></span>
<span class="dc" style="left:15.50px;top:186.10px;width:75.62px;height:15.86px"><i>Alphabet</i></span><span class="dc" style="left:92.12px;top:186.10px;width:75.62px;height:15.86px"><i>Alphabet</i></span><span class="dc" style="left:168.74px;top:186.10px;width:75.62px;height:15.86px"><i style="left:4.8px">Shaw Way</i></span><span class="dc" style="left:245.36px;top:186.10px;width:75.62px;height:15.86px"><i>48180</i></span><span class="dc" style="left:321.98px;top:186.10px;width:75.62px;height:15.86px"><i>Taylor</i></span><span class="dc" style="left:398.60px;top:186.10px;width:75.62px;height:15.86px"><i>USA</i></span><span class="dc" style="left:475.22px;top:186.10px;width:75.62px;height:15.86px"><i>Marion County</i></span><span class="dc" style="left:551.84px;top:186.10px;width:75.62px;height:15.86px"><i>4966459858</i></span>
<span class="dc" style="left:15.50px;top:202.96px;width:75.62px;height:15.86px"><i>Ford Motor</i></span><span class="dc" style="left:92.12px;top:202.96px;width:75.62px;height:15.86px"><i>Ford Motor</i></span><span class="dc" style="left:168.74px;top:202.96px;width:75.62px;height:15.86px"><i style="left:4.8px">St Catherine Street</i></span><span class="dc" style="left:245.36px;top:202.96px;width:75.62px;height:15.86px"><i>48329</i></span><span class="dc" style="left:321.98px;top:202.96px;width:75.62px;height:15.86px"><i>Waterford</i></span><span class="dc" style="left:398.60px;top:202.96px;width:75.62px;height:15.86px"><i>USA</i></span><span class="dc" style="left:475.22px;top:202.96px;width:75.62px;height:15.86px"><i>Monroe County</i></span><span class="dc" style="left:551.84px;top:202.96px;width:75.62px;height:15.86px"><i>7265998662</i></span>
<span class="dc" style="left:15.50px;top:219.82px;width:75.62px;height:15.86px"><i>Cigna</i></span><span class="dc" style="left:92.12px;top:219.82px;width:75.62px;height:15.86px"><i>Cigna</i></span><span class="dc" style="left:168.74px;top:219.82px;width:75.62px;height:15.86px"><i style="left:4.8px">Mount Lane</i></span><span class="dc" style="left:245.36px;top:219.82px;width:75.62px;height:15.86px"><i>27292</i></span><span class="dc" style="left:321.98px;top:219.82px;width:75.62px;height:15.86px"><i>Lexington</i></span><span class="dc" style="left:398.60px;top:219.82px;width:75.62px;height:15.86px"><i>USA</i></span><span class="dc" style="left:475.22px;top:219.82px;width:75.62px;height:15.86px"><i>Greene County</i></span><span class="dc" style="left:551.84px;top:219.82px;width:75.62px;height:15.86px"><i>8888792972</i></span>

<div style="left:630.6px;top:22.10px;width:1.2px;height:1.2px;background:#f3d2a4"></div><div style="left:630.4px;top:27.70px;width:1.4px;height:1.3px;background:#efb76a"></div><div style="left:630.6px;top:38.96px;width:1.2px;height:1.2px;background:#f3d2a4"></div><div style="left:630.4px;top:44.56px;width:1.4px;height:1.3px;background:#efb76a"></div><div style="left:630.6px;top:55.82px;width:1.2px;height:1.2px;background:#f3d2a4"></div><div style="left:630.4px;top:61.42px;width:1.4px;height:1.3px;background:#efb76a"></div><div style="left:630.6px;top:72.68px;width:1.2px;height:1.2px;background:#f3d2a4"></div><div style="left:630.4px;top:78.28px;width:1.4px;height:1.3px;background:#efb76a"></div><div style="left:630.6px;top:89.54px;width:1.2px;height:1.2px;background:#f3d2a4"></div><div style="left:630.4px;top:95.14px;width:1.4px;height:1.3px;background:#efb76a"></div><div style="left:630.6px;top:106.40px;width:1.2px;height:1.2px;background:#f3d2a4"></div><div style="left:630.4px;top:112.00px;width:1.4px;height:1.3px;background:#efb76a"></div><div style="left:630.6px;top:123.26px;width:1.2px;height:1.2px;background:#f3d2a4"></div><div style="left:630.4px;top:128.86px;width:1.4px;height:1.3px;background:#efb76a"></div><div style="left:630.6px;top:140.12px;width:1.2px;height:1.2px;background:#f3d2a4"></div><div style="left:630.4px;top:145.72px;width:1.4px;height:1.3px;background:#efb76a"></div><div style="left:630.6px;top:156.98px;width:1.2px;height:1.2px;background:#f3d2a4"></div><div style="left:630.4px;top:162.58px;width:1.4px;height:1.3px;background:#efb76a"></div><div style="left:630.6px;top:173.84px;width:1.2px;height:1.2px;background:#f3d2a4"></div><div style="left:630.4px;top:179.44px;width:1.4px;height:1.3px;background:#efb76a"></div><div style="left:630.6px;top:190.70px;width:1.2px;height:1.2px;background:#f3d2a4"></div><div style="left:630.4px;top:196.30px;width:1.4px;height:1.3px;background:#efb76a"></div><div style="left:630.6px;top:207.56px;width:1.2px;height:1.2px;background:#f3d2a4"></div><div style="left:630.4px;top:213.16px;width:1.4px;height:1.3px;background:#efb76a"></div><div style="left:630.6px;top:224.42px;width:1.2px;height:1.2px;background:#f3d2a4"></div><div style="left:630.4px;top:230.02px;width:1.4px;height:1.3px;background:#efb76a"></div>
<div class="sb" style="left:0;top:237.5px;width:645px;height:13px"></div>
<div class="th" style="left:12px;top:237.5px;width:286.5px;height:13px"></div>
<svg style="left:5px;top:241.3px" width="4.6" height="6" viewBox="0 0 4.6 6"><path d="M3.8 0.6L1 3L3.8 5.4" fill="none" stroke="#555" stroke-width="1.4"/></svg>
<div class="sb" style="left:631.5px;top:237.5px;width:14px;height:13px"></div>
<svg style="left:623.5px;top:241.3px" width="4.6" height="6" viewBox="0 0 4.6 6"><path d="M0.8 0.6L3.6 3L0.8 5.4" fill="none" stroke="#555" stroke-width="1.4"/></svg>
<div class="sb" style="left:631.5px;top:0;width:13px;height:237.5px"></div>
<div class="th" style="left:632.4px;top:13px;width:11.3px;height:12.6px"></div>
<svg style="left:634.6px;top:5px" width="6.4" height="4.6" viewBox="0 0 6.4 4.6"><path d="M0.7 3.8L3.2 1.1L5.7 3.8" fill="none" stroke="#555" stroke-width="1.4"/></svg>
<svg style="left:634.6px;top:229.4px" width="6.4" height="4.6" viewBox="0 0 6.4 4.6"><path d="M0.7 0.9L3.2 3.6L5.7 0.9" fill="none" stroke="#555" stroke-width="1.4"/></svg>
</div>
<span class="t m2" style="left:423px;top:798.5px">Lines:</span>
<span class="t m2" style="left:472.5px;top:798.5px">800</span>
<span class="t m2" style="left:533.8px;top:798.5px">Current line:</span>
<span class="t m2" style="left:607.5px;top:798.5px">0</span>
<span class="t m2" style="left:1001px;top:798px">Settings</span>
<svg style="left:1045.6px;top:795px" width="16.4" height="17" viewBox="0 0 16.4 17">
  <path d="M1.6 14Q0.8 13 1.8 11.8Q3.4 10.2 3.5 6.6Q3.8 1.8 8.2 1.4Q12.6 1.8 12.9 6.6Q13 10.2 14.6 11.8Q15.6 13 14.8 14Z" fill="none" stroke="#666" stroke-width="1.25" stroke-linejoin="round"/>
  <path d="M6.4 16.2H7.4M8.8 16.2H9.8" stroke="#999" stroke-width=".9"/>
</svg>
</body></html>
